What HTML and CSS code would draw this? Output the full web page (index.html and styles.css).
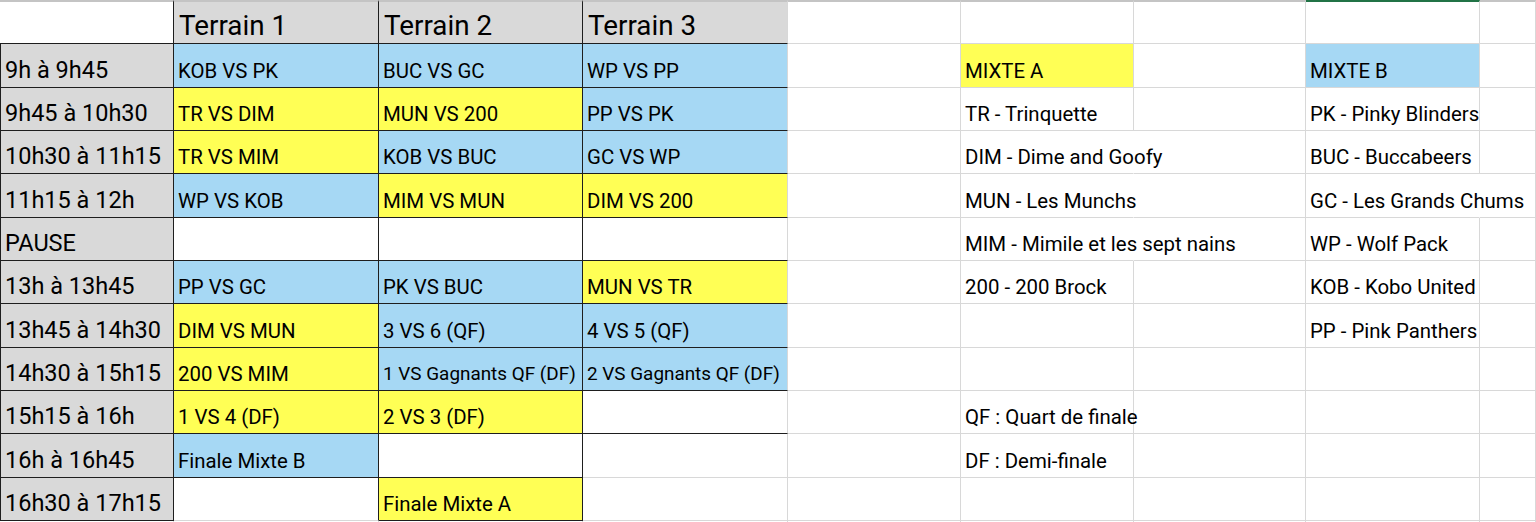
FILE: index.html
```html
<!DOCTYPE html>
<html lang="fr">
<head>
<meta charset="utf-8">
<title>Planning</title>
<link rel="stylesheet" href="styles.css">
</head>
<body>
<div class="sheet">
  <!-- header row -->
  <div class="c top hd-a"></div>
  <div class="c top hd t gray">Terrain 1</div>
  <div class="c top hd t gray">Terrain 2</div>
  <div class="c top hd t gray rl">Terrain 3</div>
  <div class="c top"></div>
  <div class="c top"></div>
  <div class="c top"></div>
  <div class="c top sel"></div>
  <div class="c top"></div>

  <!-- row 1 -->
  <div class="c time">9h à 9h45</div>
  <div class="c t blue">KOB VS PK</div>
  <div class="c t blue">BUC VS GC</div>
  <div class="c t blue rl">WP VS PP</div>
  <div class="c"></div>
  <div class="c yellow">MIXTE A</div>
  <div class="c"></div>
  <div class="c blue">MIXTE B</div>
  <div class="c"></div>

  <!-- row 2 -->
  <div class="c time">9h45 à 10h30</div>
  <div class="c t yellow">TR VS DIM</div>
  <div class="c t yellow">MUN VS 200</div>
  <div class="c t blue rl">PP VS PK</div>
  <div class="c"></div>
  <div class="c">TR - Trinquette</div>
  <div class="c"></div>
  <div class="c">PK - Pinky Blinders</div>
  <div class="c"></div>

  <!-- row 3 -->
  <div class="c time">10h30 à 11h15</div>
  <div class="c t yellow">TR VS MIM</div>
  <div class="c t blue">KOB VS BUC</div>
  <div class="c t blue rl">GC VS WP</div>
  <div class="c"></div>
  <div class="c nor">DIM - Dime and Goofy</div>
  <div class="c"></div>
  <div class="c">BUC - Buccabeers</div>
  <div class="c"></div>

  <!-- row 4 -->
  <div class="c time">11h15 à 12h</div>
  <div class="c t blue">WP VS KOB</div>
  <div class="c t yellow">MIM VS MUN</div>
  <div class="c t yellow rl">DIM VS 200</div>
  <div class="c"></div>
  <div class="c nor">MUN - Les Munchs</div>
  <div class="c"></div>
  <div class="c nor">GC - Les Grands Chums</div>
  <div class="c"></div>

  <!-- row 5 -->
  <div class="c time">PAUSE</div>
  <div class="c t"></div>
  <div class="c t"></div>
  <div class="c t rl"></div>
  <div class="c"></div>
  <div class="c nor">MIM - Mimile et les sept nains</div>
  <div class="c"></div>
  <div class="c">WP - Wolf Pack</div>
  <div class="c"></div>

  <!-- row 6 -->
  <div class="c time">13h à 13h45</div>
  <div class="c t blue">PP VS GC</div>
  <div class="c t blue">PK VS BUC</div>
  <div class="c t yellow rl">MUN VS TR</div>
  <div class="c"></div>
  <div class="c">200 - 200 Brock</div>
  <div class="c"></div>
  <div class="c">KOB - Kobo United</div>
  <div class="c"></div>

  <!-- row 7 -->
  <div class="c time">13h45 à 14h30</div>
  <div class="c t yellow">DIM VS MUN</div>
  <div class="c t blue">3 VS 6 (QF)</div>
  <div class="c t blue rl">4 VS 5 (QF)</div>
  <div class="c"></div>
  <div class="c"></div>
  <div class="c"></div>
  <div class="c">PP - Pink Panthers</div>
  <div class="c"></div>

  <!-- row 8 -->
  <div class="c time">14h30 à 15h15</div>
  <div class="c t yellow">200 VS MIM</div>
  <div class="c t blue fit">1 VS Gagnants QF (DF)</div>
  <div class="c t blue rl fit">2 VS Gagnants QF (DF)</div>
  <div class="c"></div>
  <div class="c"></div>
  <div class="c"></div>
  <div class="c"></div>
  <div class="c"></div>

  <!-- row 9 -->
  <div class="c time">15h15 à 16h</div>
  <div class="c t yellow">1 VS 4 (DF)</div>
  <div class="c t yellow">2 VS 3 (DF)</div>
  <div class="c t rl"></div>
  <div class="c"></div>
  <div class="c">QF : Quart de finale</div>
  <div class="c"></div>
  <div class="c"></div>
  <div class="c"></div>

  <!-- row 10 -->
  <div class="c time">16h à 16h45</div>
  <div class="c t blue">Finale Mixte B</div>
  <div class="c t"></div>
  <div class="c rl"></div>
  <div class="c"></div>
  <div class="c">DF : Demi-finale</div>
  <div class="c"></div>
  <div class="c"></div>
  <div class="c"></div>

  <!-- row 11 -->
  <div class="c time">16h30 à 17h15</div>
  <div class="c t bl"></div>
  <div class="c t yellow">Finale Mixte A</div>
  <div class="c"></div>
  <div class="c"></div>
  <div class="c"></div>
  <div class="c"></div>
  <div class="c"></div>
  <div class="c"></div>

  <!-- partial row 12 -->
  <div class="c end"></div>
  <div class="c end"></div>
  <div class="c end"></div>
  <div class="c end"></div>
  <div class="c end"></div>
  <div class="c end"></div>
  <div class="c end"></div>
  <div class="c end"></div>
  <div class="c end"></div>
</div>
</body>
</html>
```

FILE: styles.css
```css
:root {
  --grid: #d8d8d8;
  --dark: #1e1e1e;
  --gray: #d9d9d9;
  --blue: #a6d8f4;
  --yellow: #ffff55;
}

html, body {
  margin: 0;
  padding: 0;
  background: #ffffff;
  overflow: hidden;
}

.sheet {
  display: grid;
  grid-template-columns: 174px 205px 204px 205px 173px 173px 172px 174px 1fr;
  grid-template-rows: 44px 44px 43px 43px 44px 43px 43px 44px 43px 43px 44px 43px 20px;
  width: 1536px;
  height: 541px;
  font-family: Roboto, "Liberation Sans", sans-serif;
  font-size: 20.4px;
  color: #000;
}

.c {
  box-sizing: border-box;
  display: flex;
  align-items: flex-end;
  min-width: 0;
  white-space: nowrap;
  overflow: visible;
  line-height: 1;
  padding: 0 4px 6px 4px;
  border-right: 1px solid var(--grid);
  border-bottom: 1px solid var(--grid);
}

.top {
  border-top: 2px solid #c4c4c4;
}

.sel {
  border-top-color: #217346;
}

.hd-a {
  border-right-color: var(--dark);
  border-bottom-color: var(--dark);
}

.hd {
  font-size: 27.8px;
  padding: 0 4px 3px 5px;
}

.time {
  background: var(--gray);
  font-size: 23.5px;
  padding: 0 4px 5px 4px;
  border-left: 1px solid var(--dark);
  border-right-color: var(--dark);
  border-bottom-color: var(--dark);
}

.t {
  border-right-color: var(--dark);
  border-bottom-color: var(--dark);
}

.rl {
  border-right-color: var(--grid);
}

.bl {
  border-bottom-color: var(--grid);
}

.nor {
  border-right-color: transparent;
}

.gray { background: var(--gray); }
.blue { background: var(--blue); }
.yellow { background: var(--yellow); }

.fit {
  font-size: 18.9px;
}

.narrow {
  letter-spacing: -0.1px;
}

.end {
  border-bottom: none;
}
```
